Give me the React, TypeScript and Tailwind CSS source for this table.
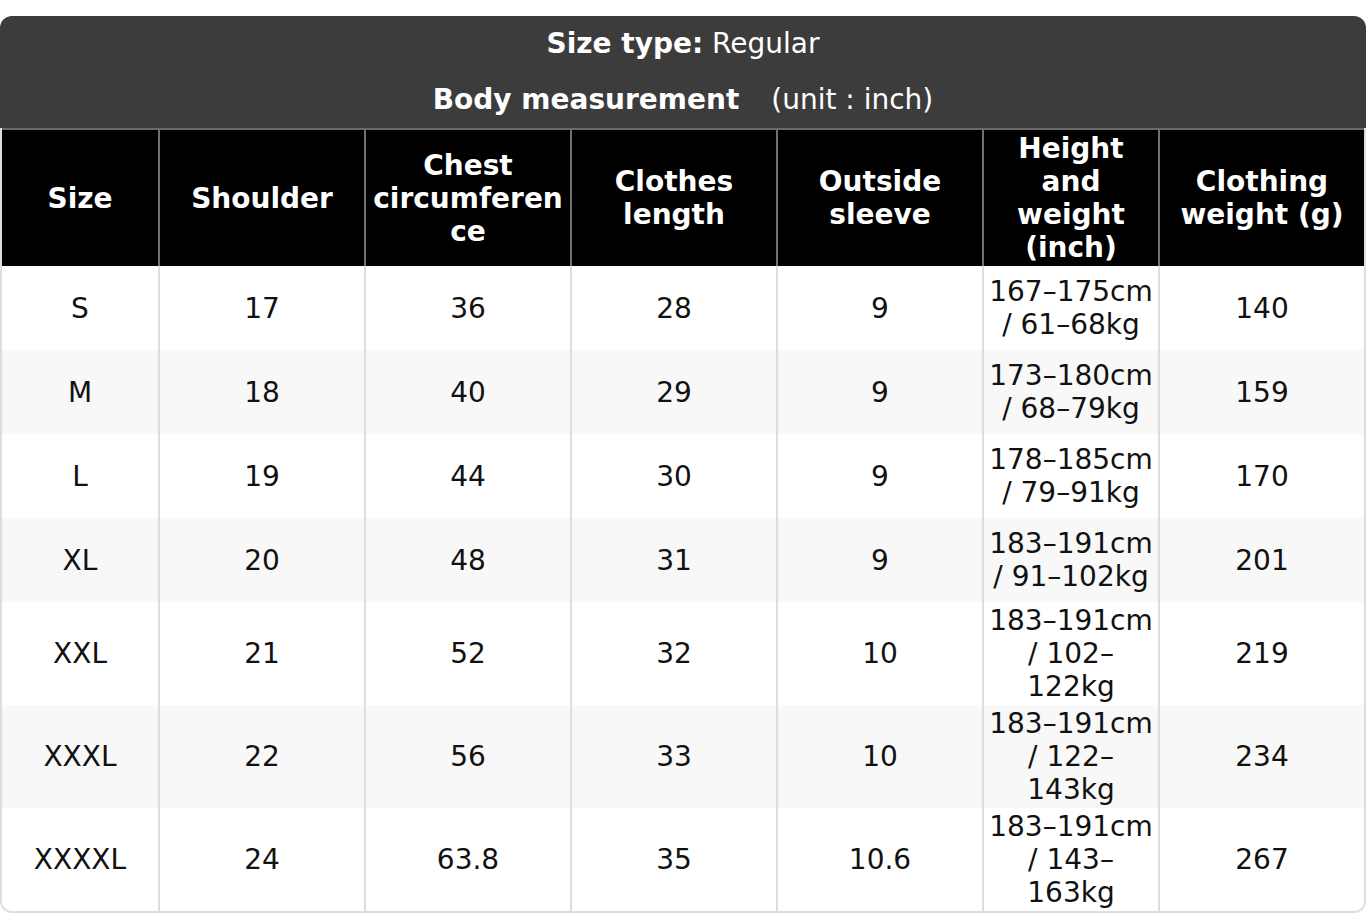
import React from 'react';

const headers = [
  'Size',
  'Shoulder',
  'Chest circumference',
  'Clothes length',
  'Outside sleeve',
  'Height and weight (inch)',
  'Clothing weight (g)',
];

const rows = [
  ['S', '17', '36', '28', '9', '167–175cm / 61–68kg', '140'],
  ['M', '18', '40', '29', '9', '173–180cm / 68–79kg', '159'],
  ['L', '19', '44', '30', '9', '178–185cm / 79–91kg', '170'],
  ['XL', '20', '48', '31', '9', '183–191cm / 91–102kg', '201'],
  ['XXL', '21', '52', '32', '10', '183–191cm / 102–122kg', '219'],
  ['XXXL', '22', '56', '33', '10', '183–191cm / 122–143kg', '234'],
  ['XXXXL', '24', '63.8', '35', '10.6', '183–191cm / 143–163kg', '267'],
];

const cols = 'grid grid-cols-[156px_206px_206px_206px_206px_176px_206px]';

export default function App() {
  return (
    <div className="min-h-screen bg-white pt-[16px] font-['DejaVu_Sans',sans-serif] text-[28px] leading-[33px]">
      {/* title block */}
      <div className="flex h-[112px] flex-col items-center gap-[23px] rounded-t-[12px] bg-[#3c3c3c] pt-[11px] text-white">
        <div>
          <span className="font-bold">Size type:</span> Regular
        </div>
        <div>
          <span className="font-bold">Body measurement</span>
          <span className="ml-[32px]">(unit : inch)</span>
        </div>
      </div>

      <div className="overflow-hidden rounded-b-[12px] border-x-2 border-b-2 border-[#dedede]">
        {/* column heads */}
        <div className={`${cols} border-t-2 border-[#6a6a6a] bg-black text-white`}>
          {headers.map((h, i) => (
            <div
              key={h}
              className={`flex min-h-[136px] items-center justify-center px-[4px] py-[2px] text-center font-bold ${i > 0 ? 'border-l-2 border-[#707070]' : ''}`}
            >
              <span className="w-full break-words">{h}</span>
            </div>
          ))}
        </div>

        {rows.map((r, ri) => (
          <div key={r[0]} className={`${cols} text-[#111] ${ri % 2 === 1 ? 'bg-[#f8f8f8]' : 'bg-white'}`}>
            {r.map((c, ci) => (
              <div
                key={ci}
                className={`flex min-h-[84px] items-center justify-center px-[4px] py-[2px] text-center ${ci > 0 ? 'border-l-2 border-[#dedede]' : ''}`}
              >
                {c}
              </div>
            ))}
          </div>
        ))}
      </div>
    </div>
  );
}
